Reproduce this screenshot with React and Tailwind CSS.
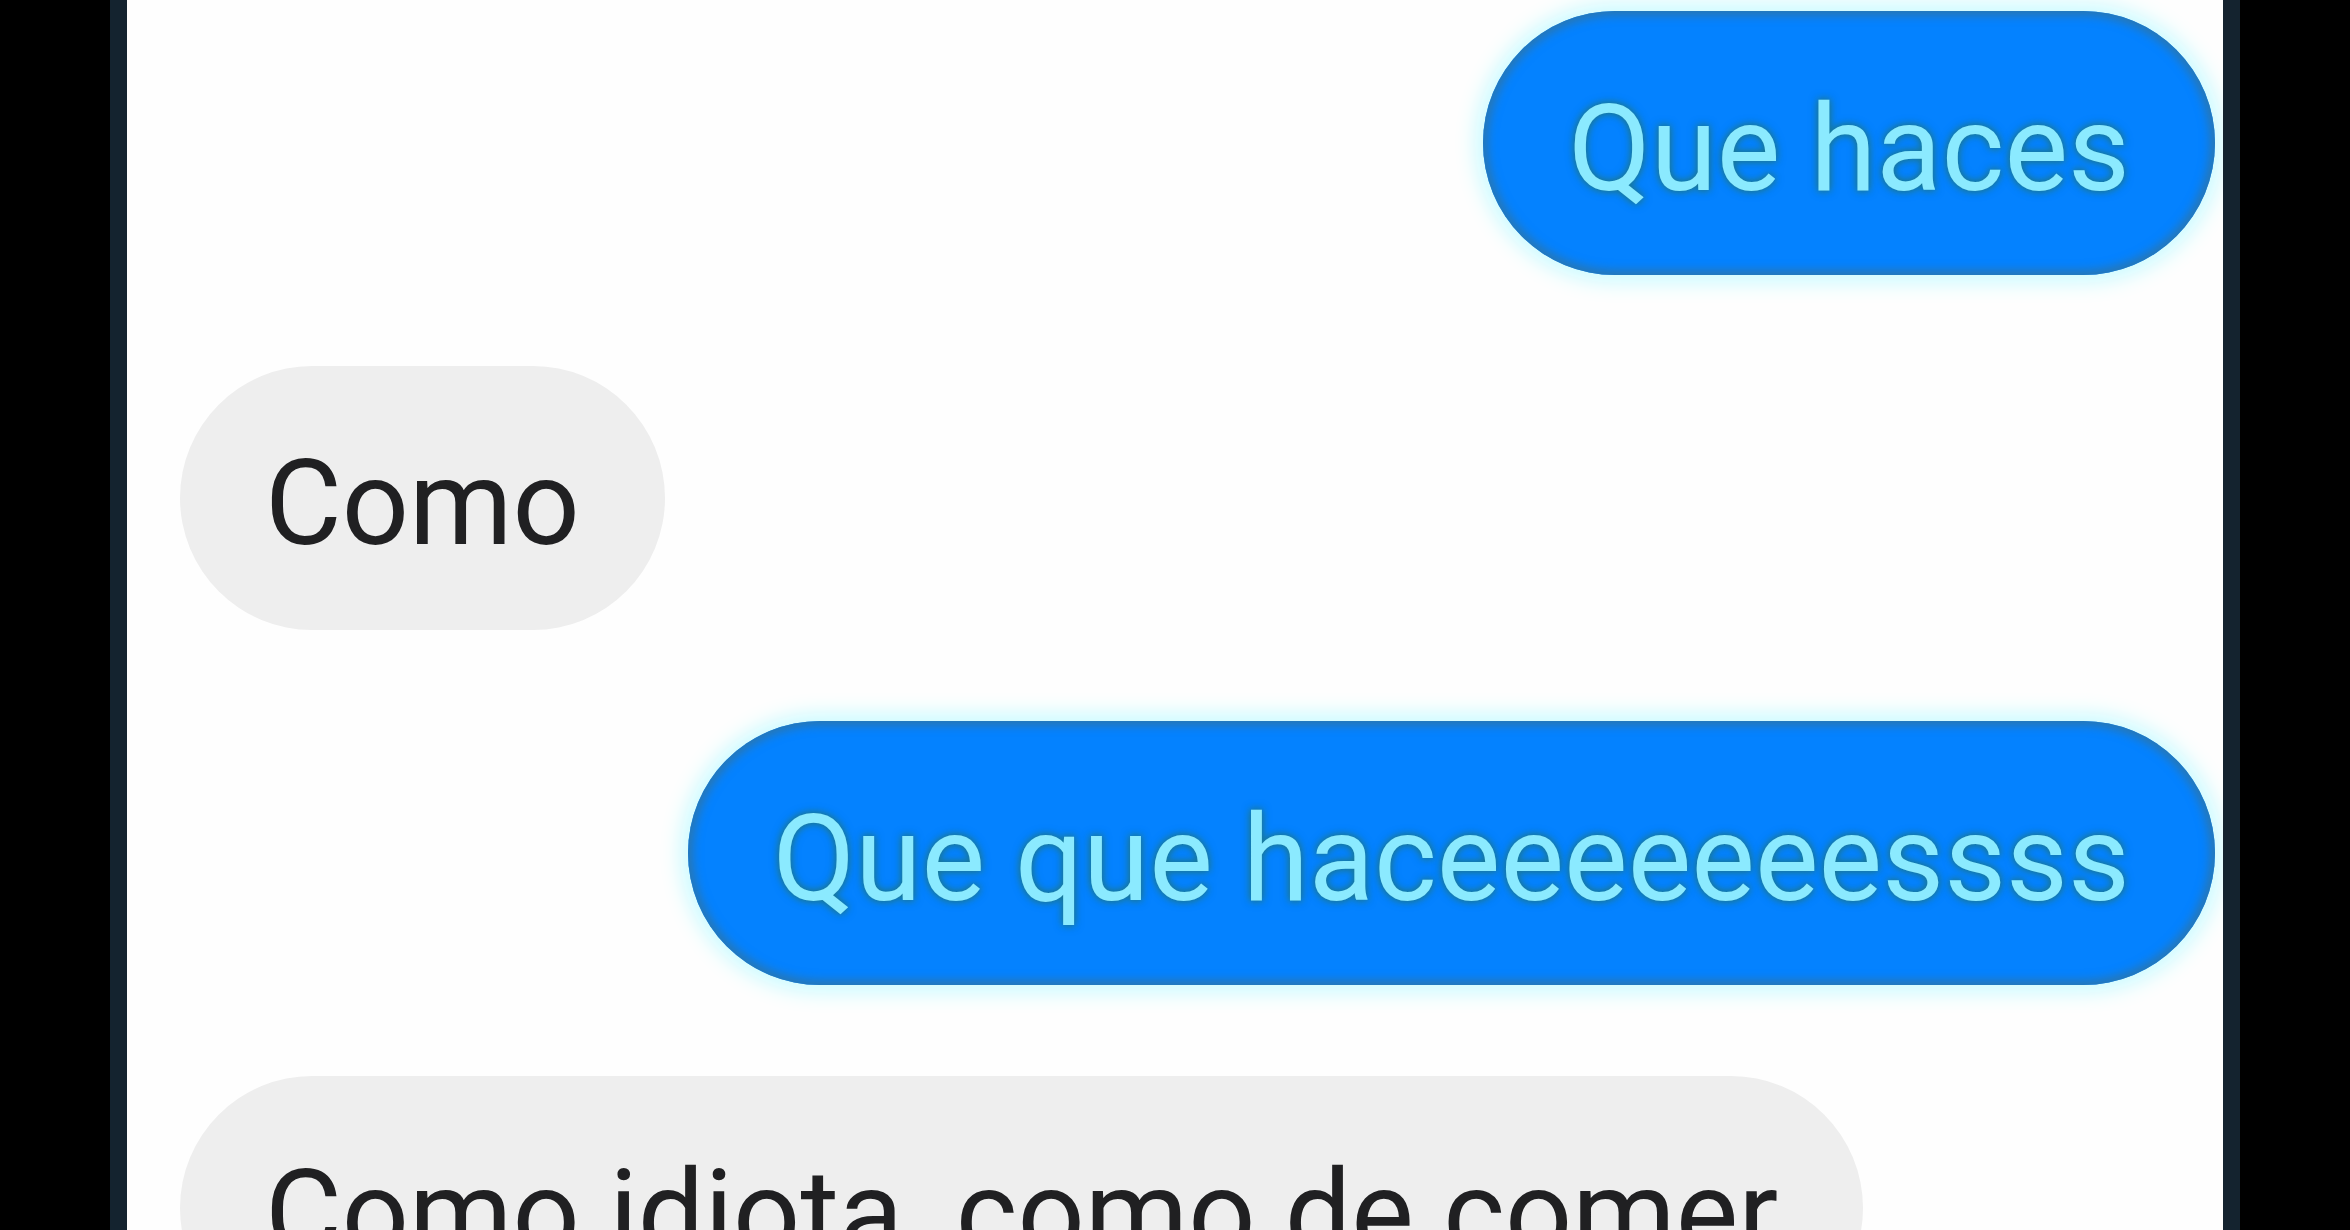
const messages = [
    { id: 1, text: 'Que haces', mine: true },
    { id: 2, text: 'Como', mine: false },
    { id: 3, text: 'Que que haceeeeeeessss', mine: true },
    { id: 4, text: 'Como idiota, como de comer', mine: false }
];

function Message({ text, mine }) {
    const bubble = mine
        ? 'self-end bg-[#0482ff] text-[120px] text-[#8beaff] shadow-[0_0_20px_8px_#ccfbff,inset_0_0_10px_5px_#2877b4] [text-shadow:0_0_10px_#1a7896,0_0_6px_#1a7896]'
        : 'self-start bg-[#eeeeee] text-[118px] text-[#202022]';

    return (
        <li className={`rounded-[132px] px-[85px] pt-[68px] pb-[56px] leading-[140px] whitespace-nowrap ${bubble}`}>
            {text}
        </li>
    );
}

export default function App() {
    return (
        <div className="h-screen overflow-hidden bg-black px-[110px] font-['Roboto',sans-serif]">
            <main className="h-full overflow-hidden border-x-[17px] border-[#14232f] bg-[#fefefe]">
                <ul className="flex flex-col gap-[91px] pt-[11px] pr-[8px] pl-[53px]">
                    {messages.map((message) => (
                        <Message key={message.id} text={message.text} mine={message.mine} />
                    ))}
                </ul>
            </main>
        </div>
    );
}
